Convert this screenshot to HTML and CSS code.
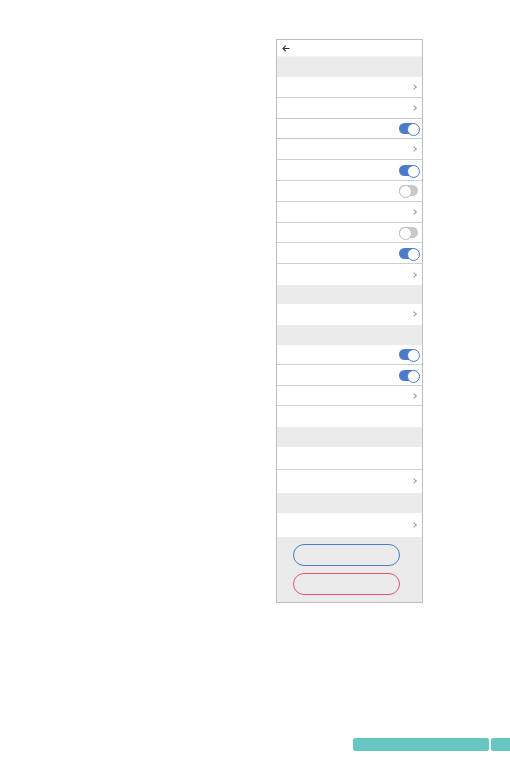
FILE: index.html
```html
<!DOCTYPE html>
<html lang="en">
<head>
    <meta charset="UTF-8">
    <meta name="viewport" content="width=device-width, initial-scale=1.0">
    <title>Settings</title>
    <link rel="stylesheet" href="styles.css">
</head>
<body>
    <div class="phone">
        <div class="header">
            <svg class="back" width="8" height="7" viewBox="0 0 8 7"><path d="M7.5 3.5H1M3.8 0.7L1 3.5l2.8 2.8" fill="none" stroke="#333" stroke-width="1.1"/></svg>
        </div>
        <div class="gap"></div>

        <div class="group group-a">
            <div class="row"><span class="chev"></span></div>
            <div class="row thick"><span class="chev"></span></div>
            <div class="row thick"><span class="toggle on"></span></div>
            <div class="row"><span class="chev"></span></div>
            <div class="row"><span class="toggle on"></span></div>
            <div class="row"><span class="toggle"></span></div>
            <div class="row"><span class="chev"></span></div>
            <div class="row"><span class="toggle"></span></div>
            <div class="row"><span class="toggle on"></span></div>
            <div class="row last"><span class="chev"></span></div>
        </div>
        <div class="gap short"></div>

        <div class="row last"><span class="chev"></span></div>
        <div class="gap"></div>

        <div class="group group-b">
            <div class="row"><span class="toggle on"></span></div>
            <div class="row"><span class="toggle on"></span></div>
            <div class="row"><span class="chev"></span></div>
            <div class="row last"></div>
        </div>
        <div class="gap"></div>

        <div class="row tall"></div>
        <div class="row tall last"><span class="chev"></span></div>
        <div class="gap"></div>

        <div class="row taller last"><span class="chev"></span></div>

        <div class="footer">
            <button class="pill blue"></button>
            <button class="pill red"></button>
        </div>
    </div>

    <div class="page-bar">
        <span class="bar-main"></span>
        <span class="bar-num"></span>
    </div>
</body>
</html>
```
FILE: styles.css
```css
* {
    box-sizing: border-box;
}
body {
    margin: 0;
    font-family: "Liberation Sans", Arial, sans-serif;
    background: #fff;
}
.phone {
    width: 147px;
    margin: 39px 0 0 276px;
    border: 1px solid #bdbdbd;
    background: #fff;
}
.header {
    height: 17px;
    display: flex;
    align-items: center;
    padding-left: 5px;
    border-bottom: 1px solid #f2f2f2;
}
.back {
    display: block;
}
.gap {
    height: 20px;
    background: #ebebeb;
}
.gap.short {
    height: 19px;
}
.row {
    height: 21px;
    display: flex;
    align-items: center;
    justify-content: flex-end;
    padding-right: 4px;
    border-bottom: 1px solid #cfcfcf;
    background: #fff;
}
.group-a .row {
    height: 20.8px;
}
.group-b .row {
    height: 20.5px;
}
.row.thick {
    border-bottom: 1.5px solid #c8c8c8;
}
.row.last {
    border-bottom: none;
}
.row.tall {
    height: 23px;
}
.row.taller {
    height: 24px;
}
.chev {
    width: 4px;
    height: 4px;
    margin-right: 2px;
    border-top: 1px solid #9a9a9a;
    border-right: 1px solid #9a9a9a;
    transform: rotate(45deg);
}
.toggle {
    position: relative;
    width: 19px;
    height: 11px;
    border-radius: 6px;
    background: #c9c9c9;
}
.toggle::after {
    content: "";
    position: absolute;
    top: 0;
    left: 0;
    width: 11px;
    height: 11px;
    border-radius: 50%;
    background: #fff;
    border: 1px solid #bdbdbd;
}
.toggle.on {
    background: #4a7ccb;
}
.toggle.on::after {
    left: 8px;
    border-color: #4a7ccb;
}
.footer {
    height: 65px;
    background: #ebebeb;
    display: flex;
    flex-direction: column;
    align-items: flex-start;
    padding: 7px 0 0 16px;
    gap: 7px;
}
.pill {
    width: 107px;
    height: 22px;
    border-radius: 11px;
    background: transparent;
    border: 1.5px solid #4a7ccb;
    padding: 0;
}
.pill.red {
    border-color: #e6546c;
}
.page-bar {
    display: flex;
    justify-content: flex-end;
    gap: 2px;
    margin-top: 135px;
}
.page-bar span {
    height: 13px;
    background: #68c7c3;
    border-radius: 2px;
}
.bar-main {
    width: 136px;
}
.bar-num {
    width: 19px;
    border-radius: 2px 0 0 2px !important;
}
```
